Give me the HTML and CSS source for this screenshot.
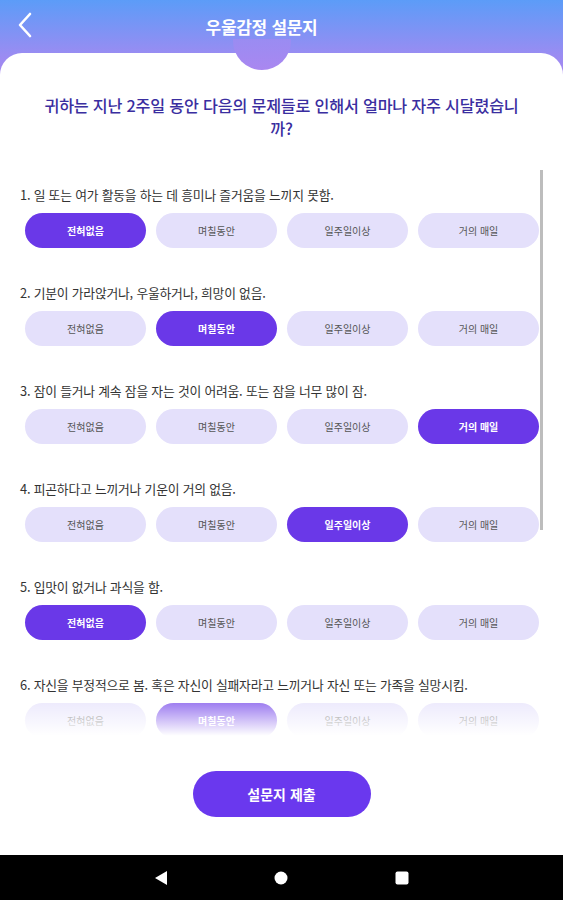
FILE: index.html
```html
<!DOCTYPE html>
<html lang="ko"><head>
<meta charset="utf-8">
<title>우울감정 설문지</title>
<link rel="stylesheet" href="styles.css"></head><body>
<div class="screen">
    <div class="topbar">
        <svg class="back" width="24" height="28" viewBox="0 0 24 28"><path d="M17 3 L7 14 L17 25" fill="none" stroke="#fff" stroke-width="2.6" stroke-linecap="round" stroke-linejoin="round"/></svg>
        <div class="title">우울감정 설문지</div>
    </div>

    <div class="card">
        <div class="notch"></div>
        <h1 class="question">귀하는 지난 2주일 동안 다음의 문제들로 인해서 얼마나 자주 시달렸습니까?</h1>

        <div class="list">
            <div class="item">
                <div class="label">1. 일 또는 여가 활동을 하는 데 흥미나 즐거움을 느끼지 못함.</div>
                <div class="opts">
                    <span class="opt on">전혀없음</span><span class="opt">며칠동안</span><span class="opt">일주일이상</span><span class="opt">거의 매일</span>
                </div>
            </div>
            <div class="item">
                <div class="label">2. 기분이 가라앉거나, 우울하거나, 희망이 없음.</div>
                <div class="opts">
                    <span class="opt">전혀없음</span><span class="opt on">며칠동안</span><span class="opt">일주일이상</span><span class="opt">거의 매일</span>
                </div>
            </div>
            <div class="item">
                <div class="label">3. 잠이 들거나 계속 잠을 자는 것이 어려움. 또는 잠을 너무 많이 잠.</div>
                <div class="opts">
                    <span class="opt">전혀없음</span><span class="opt">며칠동안</span><span class="opt">일주일이상</span><span class="opt on">거의 매일</span>
                </div>
            </div>
            <div class="item">
                <div class="label">4. 피곤하다고 느끼거나 기운이 거의 없음.</div>
                <div class="opts">
                    <span class="opt">전혀없음</span><span class="opt">며칠동안</span><span class="opt on">일주일이상</span><span class="opt">거의 매일</span>
                </div>
            </div>
            <div class="item">
                <div class="label">5. 입맛이 없거나 과식을 함.</div>
                <div class="opts">
                    <span class="opt on">전혀없음</span><span class="opt">며칠동안</span><span class="opt">일주일이상</span><span class="opt">거의 매일</span>
                </div>
            </div>
            <div class="item">
                <div class="label">6. 자신을 부정적으로 봄. 혹은 자신이 실패자라고 느끼거나 자신 또는 가족을 실망시킴.</div>
                <div class="opts">
                    <span class="opt">전혀없음</span><span class="opt on">며칠동안</span><span class="opt">일주일이상</span><span class="opt">거의 매일</span>
                </div>
            </div>
            <div class="fade"></div>
            <div class="scrollbar"></div>
        </div>

        <div class="submitrow"><button class="submit">설문지 제출</button></div>
    </div>

    <div class="navbar">
        <svg width="14" height="16" viewBox="0 0 14 16"><path d="M13 1 L1 8 L13 15 Z" fill="#fff"/></svg>
        <svg width="16" height="16" viewBox="0 0 16 16"><circle cx="8" cy="8" r="6.5" fill="#fff"/></svg>
        <svg width="16" height="16" viewBox="0 0 16 16"><rect x="1.5" y="1.5" width="13" height="13" rx="2" fill="#fff"/></svg>
    </div>
</div>
</body></html>
```

FILE: styles.css
```css
body{margin:0;padding:0;font-family:"Noto Sans CJK KR","Noto Sans",sans-serif;}
.screen{width:563px;height:900px;display:flex;flex-direction:column;
background:linear-gradient(180deg,#5c9cf8 0px,#9a8cf2 55px,#a986f0 78px,#fff 79px);}

.topbar{height:53px;display:flex;align-items:center;position:relative;}
.back{margin-left:13px;margin-top:-4px;}
.title{position:absolute;left:0;right:40px;top:14px;text-align:center;color:#fff;font-size:17px;font-weight:700;letter-spacing:-0.3px;}

.card{flex:1;background:#fff;border-radius:22px 22px 0 0;display:flex;flex-direction:column;position:relative;}
.notch{position:absolute;left:233px;top:-14px;width:58px;height:31px;border-radius:0 0 29px 29px;
background:linear-gradient(180deg,#9a8cf2,#a987f0);}

.question{margin:41px 37px 0 37px;font-size:16.2px;line-height:23px;font-weight:500;color:#3a2ea0;text-align:center;letter-spacing:-0.2px;word-break:break-all;}

.list{position:relative;height:570px;margin-top:30px;overflow:hidden;padding-top:16px;box-sizing:border-box;}
.item{margin-bottom:36px;}
.label{margin-left:20px;font-size:12.8px;line-height:18px;color:#333;letter-spacing:-0.2px;}
.opts{display:grid;grid-template-columns:repeat(4,1fr);gap:10px;margin:9px 24px 0 25px;}
.opt{height:35px;border-radius:18px;background:#e4e0fb;color:#555;font-size:10px;display:flex;align-items:center;justify-content:center;}
.opt.on{background:#6a38e8;color:#fff;font-weight:700;}
.fade{position:absolute;left:0;right:0;top:528px;height:42px;
background:linear-gradient(180deg,rgba(255,255,255,0.25),#fff 90%);}
.scrollbar{position:absolute;left:540px;top:0;width:3px;height:360px;background:#bdbdbd;}

.submitrow{flex:1;display:flex;justify-content:center;align-items:flex-start;padding-top:31px;}
.submit{width:178px;height:46px;border:0;border-radius:23px;background:#6a38ee;color:#fff;font-family:inherit;font-size:14px;font-weight:700;}

.navbar{height:45px;background:#000;display:flex;align-items:center;justify-content:center;gap:105px;}
```
